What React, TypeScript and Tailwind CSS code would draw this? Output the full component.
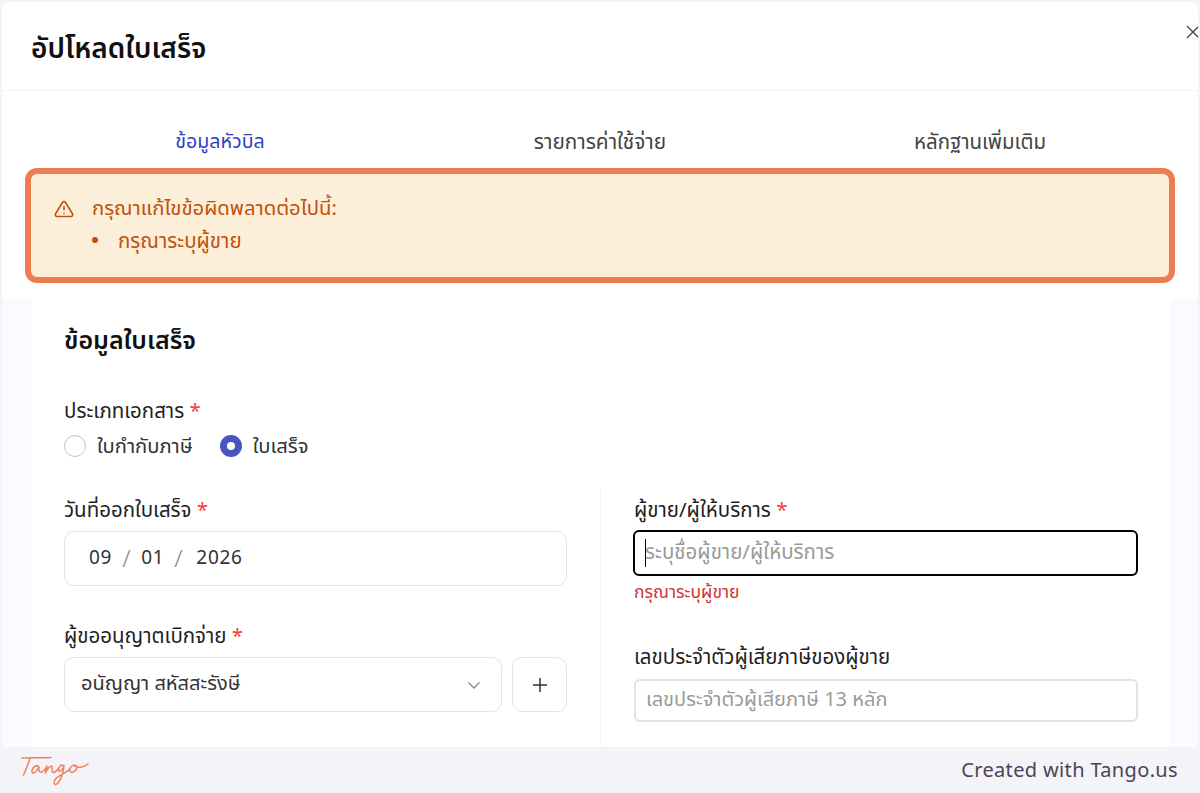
import React from "react";

const font = { fontFamily: '"Noto Sans", "Noto Sans Thai", Inter, sans-serif' };

function Star() {
  return <span className="text-[#ef4444]"> *</span>;
}

function Label({ children }: { children: React.ReactNode }) {
  return <div className="text-[20.5px] leading-[24px] text-[#1f1f1f]">{children}</div>;
}

export default function App() {
  return (
    <div className="w-[1200px] h-[793px] flex flex-col overflow-hidden bg-[#f3f3f8]" style={font}>
      <div className="flex-1 min-h-0 pt-[2px] px-[2px] overflow-hidden">
        <div className="relative h-full rounded-t-[8px] bg-white overflow-hidden">
          <div className="h-[89px] border-b border-[#f3f3f6] pl-[29px] pt-[27px] text-[28px] leading-[36px] font-semibold text-[#111]">
            อัปโหลดใบเสร็จ
          </div>
          <button className="absolute right-[-3px] top-[22px] text-[#444]">
            <svg width="16" height="16" viewBox="0 0 16 16" fill="none" stroke="currentColor" strokeWidth="1.3">
              <path d="M2 2 L14 14 M14 2 L2 14" />
            </svg>
          </button>
          <div className="grid grid-cols-3 h-[77px] pt-[37px] px-[28px] text-center text-[20.5px] leading-[26px] text-[#444]">
            <div className="text-[19.6px] text-[#2f3fc4]">ข้อมูลหัวบิล</div>
            <div className="text-[20.8px]">รายการค่าใช้จ่าย</div>
            <div>หลักฐานเพิ่มเติม</div>
          </div>
          <div className="relative z-10 mx-[23px] h-[115px] rounded-[12px] border-[6px] border-[#ef7c51] bg-[#fcefd9] flex pl-[23px] pt-[21px] text-[#c2500c] text-[20px] leading-[24px]">
            <svg className="mt-[4px] shrink-0" width="20" height="20" viewBox="0 0 24 24" fill="none" stroke="currentColor" strokeWidth="1.8" strokeLinecap="round" strokeLinejoin="round">
              <path d="M10.3 3.9 1.8 18a2 2 0 0 0 1.7 3h17a2 2 0 0 0 1.7-3L13.7 3.9a2 2 0 0 0-3.4 0z" />
              <path d="M12 9v4" />
              <path d="M12 17h.01" />
            </svg>
            <div className="ml-[18px]">
              <div className="text-[20.3px]">กรุณาแก้ไขข้อผิดพลาดต่อไปนี้:</div>
              <div className="flex items-center mt-[9px]">
                <span className="w-[6px] h-[6px] rounded-full bg-[#c2500c] mr-[20px]" />
                <span className="text-[20.5px]">กรุณาระบุผู้ขาย</span>
              </div>
            </div>
          </div>
          <div className="mt-[15px] bg-[#fbfbff] pl-[29px] pr-[28px] h-[500px]">
            <div className="bg-white h-full pl-[33px] pt-[25px]">
              <div className="text-[25px] leading-[32px] font-semibold text-[#111]">ข้อมูลใบเสร็จ</div>
              <div className="mt-[43px]">
                <Label>ประเภทเอกสาร<Star /></Label>
                <div className="flex items-center mt-[13px] text-[20.2px] leading-[24px] text-[#333]">
                  <span className="w-[22px] h-[22px] rounded-full border border-[#c4c4cc] bg-white" />
                  <span className="ml-[11px] -mt-[2px]">ใบกำกับภาษี</span>
                  <span className="ml-[27px] w-[22px] h-[22px] rounded-full border-[7px] border-[#4a55c0] bg-white" />
                  <span className="ml-[11px] -mt-[2px]">ใบเสร็จ</span>
                </div>
              </div>
              <div className="flex mt-[40px]">
                <div className="w-[503px] shrink-0">
                  <Label>วันที่ออกใบเสร็จ<Star /></Label>
                  <div className="mt-[10px] h-[55px] rounded-[10px] border border-[#e4e4e7] flex items-center pl-[24px] pb-[2px] text-[19px] tracking-[0.7px] text-[#333]">
                    <span>09</span>
                    <span className="mx-[10px] text-[24px] font-light text-[#888]">/</span>
                    <span>01</span>
                    <span className="mx-[10px] text-[24px] font-light text-[#888]">/</span>
                    <span className="ml-[3px]">2026</span>
                  </div>
                  <div className="mt-[37px]">
                    <Label>ผู้ขออนุญาตเบิกจ่าย<Star /></Label>
                    <div className="mt-[10px] flex gap-[10px]">
                      <div className="flex-1 h-[55px] rounded-[10px] border border-[#e4e4e7] flex items-center justify-between pl-[16px] pr-[19px] text-[20px] text-[#333]">
                        <span className="-mt-[3px]">อนัญญา สหัสสะรังษี</span>
                        <svg width="16" height="16" viewBox="0 0 16 16" fill="none" stroke="#8a8a8a" strokeWidth="1.3">
                          <path d="M2.5 5.5 L8 11 L13.5 5.5" />
                        </svg>
                      </div>
                      <div className="w-[55px] h-[55px] rounded-[10px] border border-[#e4e4e7] flex items-center justify-center text-[#333]">
                        <svg width="18" height="18" viewBox="0 0 18 18" fill="none" stroke="currentColor" strokeWidth="1.5">
                          <path d="M9 2 V16 M2 9 H16" />
                        </svg>
                      </div>
                    </div>
                  </div>
                </div>
                <div className="ml-[33px] w-[1px] border-l border-dotted border-[#eeeeee] h-[300px] shrink-0 -mt-[8px]" />
                <div className="ml-[32px] w-[505px] shrink-0">
                  <div className="pl-[1px]">
                    <Label>ผู้ขาย/ผู้ให้บริการ<Star /></Label>
                  </div>
                  <div className="mt-[9px] h-[46px] rounded-[6px] border-2 border-black flex items-center pl-[10px] pb-[3px] text-[20.5px] text-[#9a9a9a]">
                    <span className="w-[1px] h-[28px] bg-black -mr-[1px] mt-[3px]" />
                    <span>ระบุชื่อผู้ขาย/ผู้ให้บริการ</span>
                  </div>
                  <div className="pl-[1px] mt-[5px] text-[17.5px] leading-[20px] text-[#d03434]">กรุณาระบุผู้ขาย</div>
                  <div className="pl-[1px] mt-[43px]">
                    <Label>เลขประจำตัวผู้เสียภาษีของผู้ขาย</Label>
                  </div>
                  <div className="ml-[1px] w-[504px] mt-[11px] h-[43px] rounded-[6px] border-2 border-[#e2e2e2] flex items-center pl-[10px] pb-[3px] text-[20px] text-[#9a9a9a]">
                    เลขประจำตัวผู้เสียภาษี 13 หลัก
                  </div>
                </div>
              </div>
            </div>
          </div>
        </div>
      </div>
      <div className="h-[46px] shrink-0 bg-[#f3f3f8] flex items-center justify-between pl-[19px] pr-[22px]">
        <svg width="70" height="42" viewBox="0 0 70 42" fill="none" stroke="#f0825a" strokeWidth="1.5" strokeLinecap="round" strokeLinejoin="round" className="-mt-[2px]">
          <path d="M3 10 C10 9.5 22 10 32 9.5" />
          <path d="M11 10 C9.5 16 7 21 4.5 27" />
          <path d="M20 19 C17 16 12.5 20 13 24 C14 27 18 23 20 19 C19.5 22 20 25 23 24 C25 23 27 20 28 18 C27.5 20 26.5 23 26.5 25 C28 21 31 17.5 33 18.5 C34 20 32 23 34 24.5 C36 25 38 22 40 20" />
          <path d="M45 18 C42 15.5 38.5 19.5 39.5 22.5 C41 25 44 21 45 18 C44.5 23 43 30 39 35 C36 38 33.5 36 36.5 31 C40 27 47 25 51 21" />
          <path d="M56 17 C52 17 49.5 21 51 23.5 C53.5 25.5 58.5 22 58 19 C57.5 17.5 56 17 55.5 18 C58 20 64 20 69 16" />
        </svg>
        <div className="text-[20px] tracking-[0.35px] text-[#4a4458]">Created with Tango.us</div>
      </div>
    </div>
  );
}
